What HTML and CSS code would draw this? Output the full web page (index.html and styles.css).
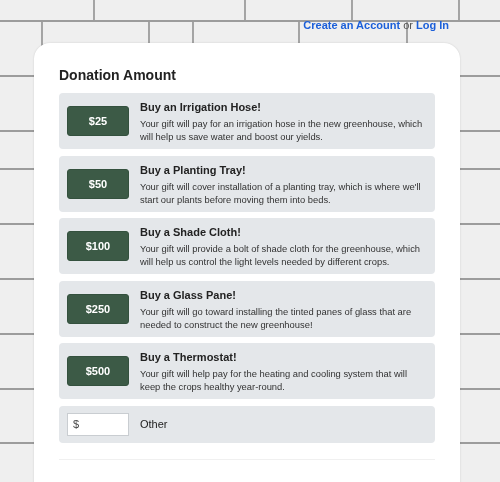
FILE: index.html
```html
<!DOCTYPE html>
<html lang="en">
<head>
<meta charset="utf-8">
<title>Donation Amount</title>
<link rel="stylesheet" href="styles.css">
</head>
<body>
<svg class="tiles" width="500" height="482" viewBox="0 0 500 482" xmlns="http://www.w3.org/2000/svg">
  <g stroke="#9c9c9c" stroke-width="1.8" fill="none">
    <line x1="0" y1="21" x2="500" y2="21"/>
    <line x1="0" y1="76" x2="500" y2="76"/>
    <line x1="0" y1="131" x2="500" y2="131"/>
    <line x1="0" y1="169" x2="500" y2="169"/>
    <line x1="0" y1="224" x2="500" y2="224"/>
    <line x1="0" y1="279" x2="500" y2="279"/>
    <line x1="0" y1="334" x2="500" y2="334"/>
    <line x1="0" y1="389" x2="500" y2="389"/>
    <line x1="0" y1="443" x2="500" y2="443"/>
    <line x1="94" y1="0" x2="94" y2="21"/>
    <line x1="245" y1="0" x2="245" y2="21"/>
    <line x1="352" y1="0" x2="352" y2="21"/>
    <line x1="459" y1="0" x2="459" y2="21"/>
    <line x1="42" y1="21" x2="42" y2="76"/>
    <line x1="149" y1="21" x2="149" y2="76"/>
    <line x1="193" y1="21" x2="193" y2="76"/>
    <line x1="299" y1="21" x2="299" y2="76"/>
    <line x1="407" y1="21" x2="407" y2="76"/>
  </g>
</svg>

<div class="topbar">
  <a href="#" class="link">Create an Account</a> <span class="or">or</span> <a href="#" class="link">Log In</a>
</div>

<main class="card">
  <h2 class="heading">Donation Amount</h2>

  <div class="option">
    <button class="amount">$25</button>
    <div class="info">
      <div class="title">Buy an Irrigation Hose!</div>
      <div class="desc">Your gift will pay for an irrigation hose in the new greenhouse, which will help us save water and boost our yields.</div>
    </div>
  </div>

  <div class="option">
    <button class="amount">$50</button>
    <div class="info">
      <div class="title">Buy a Planting Tray!</div>
      <div class="desc">Your gift will cover installation of a planting tray, which is where we'll start our plants before moving them into beds.</div>
    </div>
  </div>

  <div class="option">
    <button class="amount">$100</button>
    <div class="info">
      <div class="title">Buy a Shade Cloth!</div>
      <div class="desc">Your gift will provide a bolt of shade cloth for the greenhouse, which will help us control the light levels needed by different crops.</div>
    </div>
  </div>

  <div class="option">
    <button class="amount">$250</button>
    <div class="info">
      <div class="title">Buy a Glass Pane!</div>
      <div class="desc">Your gift will go toward installing the tinted panes of glass that are needed to construct the new greenhouse!</div>
    </div>
  </div>

  <div class="option">
    <button class="amount">$500</button>
    <div class="info">
      <div class="title">Buy a Thermostat!</div>
      <div class="desc">Your gift will help pay for the heating and cooling system that will keep the crops healthy year-round.</div>
    </div>
  </div>

  <div class="option other">
    <input class="other-input" type="text" value="$">
    <div class="other-label">Other</div>
  </div>

  <div class="divider"></div>
</main>
</body>
</html>
```

FILE: styles.css
```css
html, body {
  margin: 0;
  padding: 0;
}

body {
  background: #efefef;
  font-family: "Liberation Sans", Arial, sans-serif;
  color: #222;
  overflow: hidden;
  height: 482px;
}

.tiles {
  position: fixed;
  left: 0;
  top: 0;
  z-index: -1;
}

.topbar {
  text-align: right;
  padding: 19px 51px 0 0;
  font-size: 11px;
  line-height: 13px;
  height: 13px;
}

.link {
  color: #1b5fd9;
  font-weight: bold;
  text-decoration: none;
}

.or {
  color: #555;
}

.card {
  margin: 11px 0 0 34px;
  width: 376px;
  padding: 23px 25px 60px 25px;
  background: #fff;
  border-radius: 16px;
  box-shadow: 0 0 2px rgba(0, 0, 0, 0.15);
}

.heading {
  margin: 0 0 9px 0;
  font-size: 14px;
  line-height: 18px;
  font-weight: bold;
  color: #222;
}

.option {
  display: flex;
  align-items: center;
  background: #e4e7ea;
  border-radius: 4px;
  height: 56px;
  margin-bottom: 6.5px;
  padding: 0 8px;
}

.amount {
  flex: 0 0 auto;
  width: 62px;
  height: 30px;
  background: #3c5a46;
  border: 1px solid #34513e;
  border-radius: 3px;
  color: #fff;
  font-family: "Liberation Sans", Arial, sans-serif;
  font-size: 11px;
  font-weight: bold;
  padding: 0;
}

.info {
  margin-left: 11px;
  padding-top: 2px;
}

.title {
  font-size: 11px;
  line-height: 13px;
  font-weight: bold;
  color: #222;
}

.desc {
  margin-top: 3px;
  font-size: 9.4px;
  line-height: 13px;
  color: #333;
}

.other {
  height: 37px;
}

.other-input {
  width: 62px;
  height: 23px;
  box-sizing: border-box;
  border: 1px solid #c9cdd1;
  border-radius: 0;
  background: #fff;
  font-family: "Liberation Sans", Arial, sans-serif;
  font-size: 11px;
  color: #444;
  padding: 0 0 0 5px;
  margin: 0;
}

.other-label {
  margin-left: 11px;
  font-size: 11px;
  color: #222;
}

.divider {
  margin-top: 16px;
  border-top: 1px solid #f0f0f0;
}
```
